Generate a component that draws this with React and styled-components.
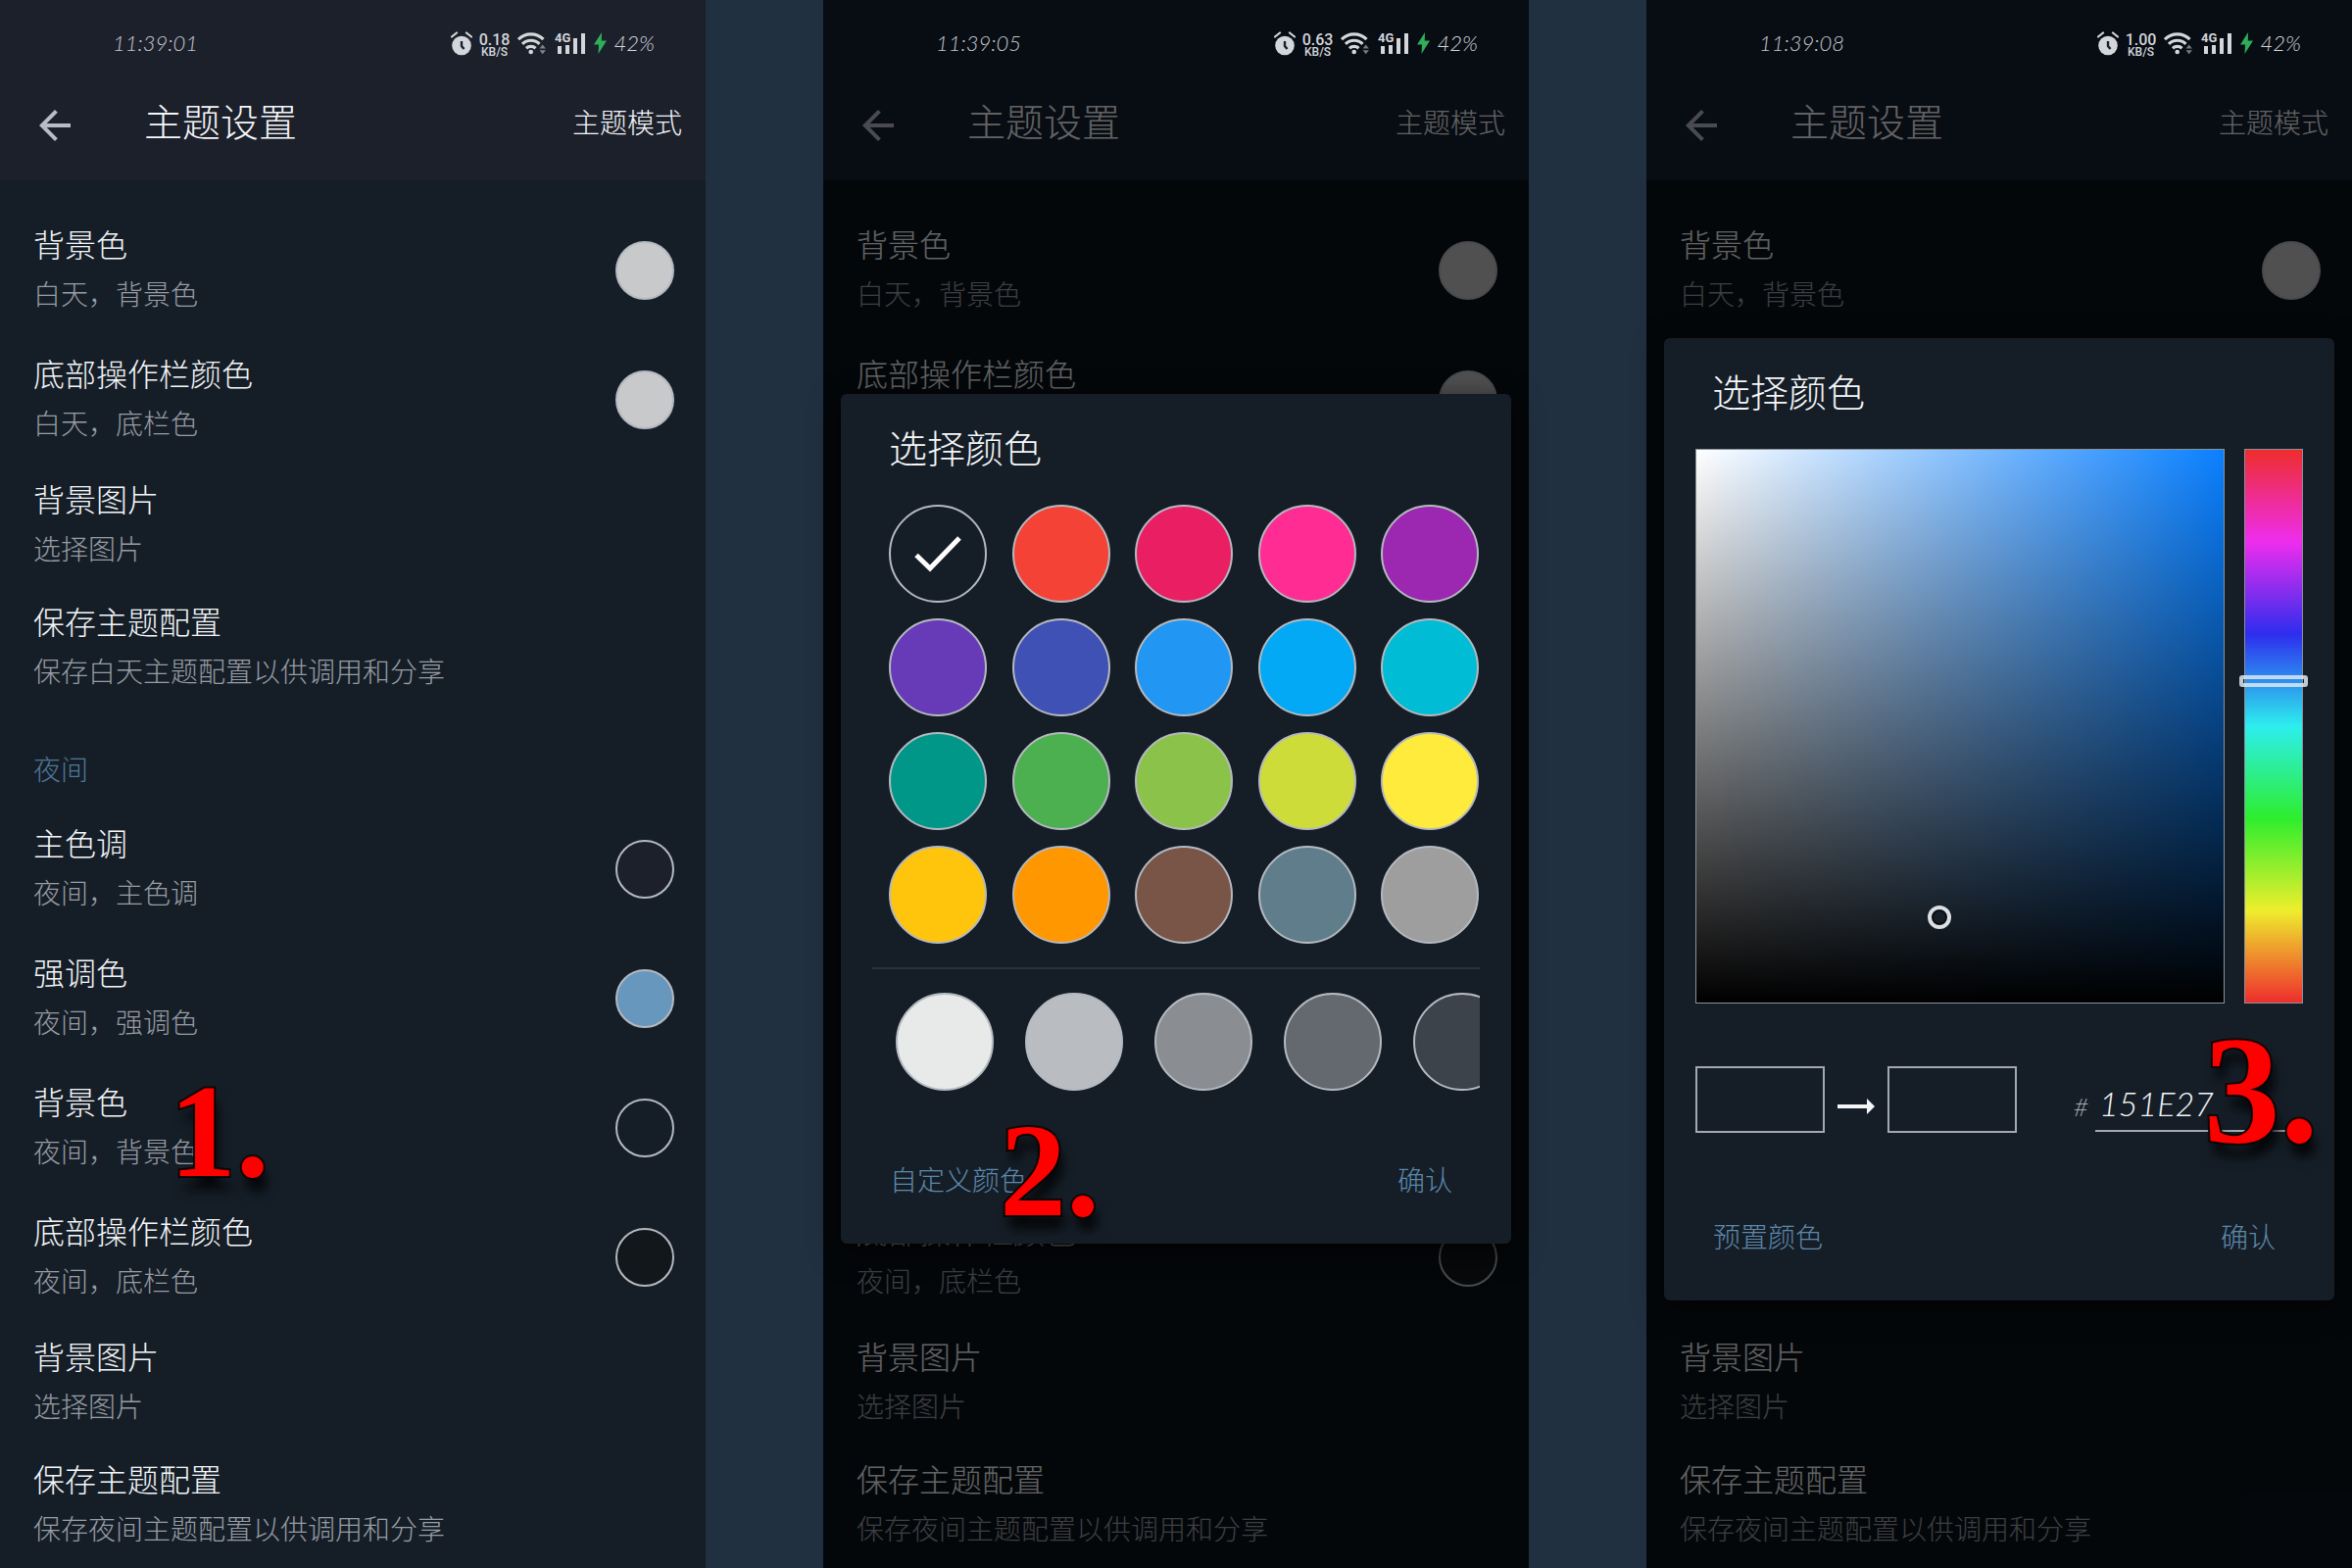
// Dependencies
import React, { useState } from 'react';
import styled, { createGlobalStyle } from 'styled-components';
import { MdArrowBack } from 'react-icons/md';

// Data
const daySettings = [
  { title: '背景色', summary: '白天，背景色', color: '#c8c9cb' },
  { title: '底部操作栏颜色', summary: '白天，底栏色', color: '#c8c9cb' },
  { title: '背景图片', summary: '选择图片' },
  { title: '保存主题配置', summary: '保存白天主题配置以供调用和分享' },
];

const nightSettings = [
  { title: '主色调', summary: '夜间，主色调', color: '#1c202b' },
  { title: '强调色', summary: '夜间，强调色', color: '#6797bd' },
  { title: '背景色', summary: '夜间，背景色', color: '#151e27' },
  { title: '底部操作栏颜色', summary: '夜间，底栏色', color: '#12171b' },
  { title: '背景图片', summary: '选择图片' },
  { title: '保存主题配置', summary: '保存夜间主题配置以供调用和分享' },
];

const presets = [
  '#151e27', '#f44336', '#e91e63', '#ff2c93', '#9c27b0',
  '#673ab7', '#3f51b5', '#2196f3', '#03a9f4', '#00bcd4',
  '#009688', '#4caf50', '#8bc34a', '#cddc39', '#ffeb3b',
  '#ffc40c', '#ff9800', '#795548', '#607d8b', '#9e9e9e',
];

const shades = ['#e8eaea', '#b9bdc1', '#8a8e92', '#646970', '#3d434b'];

// Styles
const GlobalStyle = createGlobalStyle`
  * {
    box-sizing: border-box;
  }
  body {
    margin: 0;
    background: #213040;
    font-family: 'Noto Sans CJK SC', sans-serif;
    font-weight: 300;
  }
  button {
    padding: 0;
    border: 0;
    background: none;
    font: inherit;
    color: inherit;
    cursor: pointer;
  }
`;

const Page = styled.main`
  display: grid;
  grid-template-columns: repeat(3, minmax(0, 1fr));
  column-gap: 5%;
  min-height: 100vh;
`;

const Phone = styled.section`
  position: relative;
  background: ${(props) => (props.$dimmed ? '#0b121b' : '#151e27')};
  color: #f4f6f8;
`;

const Header = styled.header`
  background: ${(props) => (props.$dimmed ? '#161e30' : '#1c202b')};
`;

const StatusBar = styled.div`
  position: relative;
  z-index: 2;
  display: flex;
  align-items: center;
  justify-content: space-between;
  height: 64px;
  padding: 24px 52px 0 115px;
  font-family: Lato, sans-serif;
  font-size: 22px;
  font-style: italic;
  line-height: 40px;
  color: #c3c6cc;
`;

const StatusIcons = styled.div`
  display: flex;
  align-items: center;
  gap: 8px;
  color: #d3d6db;

  svg {
    display: block;
  }
`;

const NetSpeed = styled.span`
  display: flex;
  flex-direction: column;
  align-items: center;
  width: 30px;
  padding-top: 6px;
  font-family: Roboto, sans-serif;
  font-size: 16px;
  font-style: normal;
  font-weight: 500;
  line-height: 13px;

  small {
    font-size: 12px;
  }
`;

const AppBar = styled.div`
  display: flex;
  align-items: center;
  height: 120px;
  padding: 0 24px 0 32px;
`;

const BackButton = styled.button`
  display: flex;
  margin-top: 8px;
  font-size: 48px;
  color: #b9bcc8;
`;

const PageTitle = styled.h1`
  flex: 1;
  margin: 0 0 0 67px;
  padding-bottom: 4px;
  font-size: 39px;
  font-weight: 300;
`;

const ModeButton = styled.button`
  font-size: 28px;
`;

const Settings = styled.div`
  padding-top: 26px;
`;

const SectionTitle = styled.h2`
  margin: 0;
  padding: 39px 34px 16px;
  font-size: 28px;
  font-weight: 300;
  line-height: 42px;
  color: #4f7899;
`;

const Row = styled.div`
  display: flex;
  align-items: center;
  justify-content: space-between;
  height: ${(props) => (props.$tall ? '132px' : '125px')};
  padding: 0 32px 0 34px;
`;

const RowText = styled.div`
  display: flex;
  flex-direction: column;
  gap: 9px;
  padding-bottom: 6px;
  line-height: 42px;
`;

const RowTitle = styled.span`
  font-size: 32px;
`;

const RowSummary = styled.span`
  font-size: 28px;
  color: #989ca4;
`;

const Swatch = styled.button`
  display: flex;
  flex: none;
  align-items: center;
  justify-content: center;
  width: ${(props) => props.$size}px;
  height: ${(props) => props.$size}px;
  border: 2px solid #b5b9c0;
  border-radius: 50%;
  background: ${(props) => props.$color};
`;

const Scrim = styled.div`
  position: absolute;
  inset: 0;
  z-index: 1;
  display: flex;
  flex-direction: column;
  justify-content: center;
  padding: 71px 18px 0;
  background: rgba(0, 0, 0, 0.6);
`;

const Dialog = styled.div`
  border-radius: 6px;
  background: #151e27;
  box-shadow: 0 8px 30px rgba(0, 0, 0, 0.7);
`;

const DialogTitle = styled.h2`
  margin: 0;
  padding: 29px 49px 36px;
  font-size: 39px;
  font-weight: 300;
  line-height: 48px;
`;

const PresetGrid = styled.div`
  display: grid;
  grid-template-columns: repeat(5, 100px);
  justify-content: space-between;
  row-gap: 16px;
  padding: 0 33px 0 49px;
`;

const Divider = styled.hr`
  height: 2px;
  margin: 24px 32px;
  border: 0;
  background: #2a333b;
`;

const ShadeStrip = styled.div`
  display: flex;
  gap: 32px;
  margin: 0 32px 28px;
  padding-left: 24px;
  overflow: hidden;
`;

const DialogActions = styled.div`
  display: flex;
  align-items: center;
  justify-content: space-between;
  height: 128px;
  padding: 0 60px 4px 50px;
  font-size: 28px;
  color: #5d88ab;
`;

const PickerArea = styled.div`
  display: flex;
  gap: 20px;
  height: 566px;
  margin: 0 32px 64px;
`;

const Saturation = styled.div`
  position: relative;
  flex: 1;
  border: 1px solid #8b9198;
  background: linear-gradient(to top, #000, transparent),
    linear-gradient(to right, #fff, #0a80ff);
`;

const Cursor = styled.span`
  position: absolute;
  width: 24px;
  height: 24px;
  margin: -12px 0 0 -12px;
  border: 4px solid #dcdfe3;
  border-radius: 50%;
  box-shadow: inset 0 0 0 2px #0b0e11;
`;

const HueSlider = styled.input`
  appearance: none;
  writing-mode: vertical-lr;
  direction: rtl;
  width: 60px;
  height: 100%;
  margin: 0;
  border: 1px solid #8b9198;
  background: linear-gradient(
    #ee2d2d,
    #ee2dee,
    #2d2dee,
    #2deeee,
    #2dee2d,
    #eeee2d,
    #ee2d2d
  );

  &::-webkit-slider-thumb {
    appearance: none;
    width: 70px;
    height: 12px;
    border: 4px solid rgba(220, 232, 240, 0.85);
    border-radius: 3px;
  }
`;

const CompareRow = styled.div`
  display: flex;
  justify-content: space-between;
  margin: 0 40px 43px 32px;
`;

const Compare = styled.div`
  display: flex;
  gap: 13px;
`;

const ColorBox = styled.span`
  width: 132px;
  height: 68px;
  border: 2px solid #a3a8b0;
  background: #151e27;
`;

const HexField = styled.label`
  display: flex;
  gap: 7px;
  padding-top: 15px;
  font-family: Lato, sans-serif;
  font-size: 26px;
  font-style: italic;
  line-height: 52px;
  color: #a3a8b0;
`;

const HexInput = styled.input`
  width: 204px;
  height: 52px;
  padding: 0 0 4px 4px;
  border: 0;
  border-bottom: 2px solid #a3a8b0;
  background: none;
  font: inherit;
  font-size: 34px;
  color: #f4f6f8;
`;

// Step numbers pinned over the phones
const Step = styled.strong`
  position: absolute;
  z-index: 3;
  left: ${(props) => props.$left};
  top: ${(props) => props.$top};
  font-family: 'Liberation Serif', serif;
  font-size: ${(props) => props.$size}px;
  font-weight: 700;
  line-height: 1;
  color: #f00;
  -webkit-text-stroke: 4px #140404;
  paint-order: stroke fill;
  text-shadow: 4px 14px 12px rgba(0, 0, 0, 0.8);
`;

const AlarmIcon = () => (
  <svg width='22' height='25' viewBox='0 0 22 25'>
    <circle cx='11' cy='14.5' r='9.8' fill='currentColor' />
    <path
      d='M1 5.500 6 1.500M21 5.500 16 1.500'
      stroke='currentColor'
      strokeWidth='2.2'
      strokeLinecap='round'
    />
    <path d='M11 10v5l2.500 3' fill='none' stroke='#1c202b' strokeWidth='2.4' />
  </svg>
);

const WifiIcon = () => (
  <svg width='30' height='24' viewBox='0 0 30 24'>
    <g fill='none' stroke='currentColor' strokeWidth='3.2'>
      <path d='M1 8.200a18 18 0 0 1 25.500 0' />
      <path d='M5 12.800a12.500 12.500 0 0 1 17.500 0' />
      <path d='M9 17.200a7 7 0 0 1 9.500 0' />
    </g>
    <circle cx='13.7' cy='21' r='2.3' fill='currentColor' />
    <path
      d='m22.500 17.500 3.200-4 3.200 4zM22.500 19.200h6.400l-3.200 4z'
      fill='currentColor'
      opacity='.55'
    />
  </svg>
);

const SignalIcon = () => (
  <svg width='32' height='24' viewBox='0 0 32 24'>
    <g fill='currentColor'>
      <rect x='3' y='15' width='4' height='8' />
      <rect x='11' y='14' width='4' height='9' />
      <rect x='19' y='7' width='4' height='16' />
      <rect x='27' y='2' width='4' height='21' />
    </g>
    <text
      x='0'
      y='11'
      fill='currentColor'
      fontFamily='Roboto, sans-serif'
      fontSize='13'
      fontStyle='normal'
      fontWeight='700'
    >
      4G
    </text>
  </svg>
);

const BoltIcon = () => (
  <svg width='13' height='22' viewBox='0 0 13 22'>
    <path d='M8 0 0 12.500h5L4.500 22 13 8.500H7.800z' fill='#2fae5a' />
  </svg>
);

const CheckIcon = () => (
  <svg width='48' height='40' viewBox='0 0 48 40'>
    <path d='M2 21.500 16 35 46 4' fill='none' stroke='#fff' strokeWidth='5' />
  </svg>
);

const RightArrow = () => (
  <svg width='38' height='68' viewBox='0 0 38 68'>
    <path d='M0 39h30v-6l8 8-8 8v-6H0z' fill='#f4f6f8' />
  </svg>
);

const SettingRow = ({ title, summary, color }) => (
  <Row $tall={!!color}>
    <RowText>
      <RowTitle>{title}</RowTitle>
      <RowSummary>{summary}</RowSummary>
    </RowText>
    {color && <Swatch $size={60} $color={color} aria-label={title} />}
  </Row>
);

const ThemePhone = ({ time, speed, dimmed, children }) => {
  return (
    <Phone $dimmed={dimmed}>
      <Header $dimmed={dimmed}>
        <StatusBar>
          <span>{time}</span>
          <StatusIcons>
            <AlarmIcon />
            <NetSpeed>
              {speed}
              <small>KB/S</small>
            </NetSpeed>
            <WifiIcon />
            <SignalIcon />
            <BoltIcon />
            <span>42%</span>
          </StatusIcons>
        </StatusBar>
        <AppBar>
          <BackButton aria-label='返回'>
            <MdArrowBack />
          </BackButton>
          <PageTitle>主题设置</PageTitle>
          <ModeButton>主题模式</ModeButton>
        </AppBar>
      </Header>
      <Settings>
        {daySettings.map((item) => (
          <SettingRow key={item.title} {...item} />
        ))}
        <SectionTitle>夜间</SectionTitle>
        {nightSettings.map((item) => (
          <SettingRow key={item.title} {...item} />
        ))}
      </Settings>
      {children}
    </Phone>
  );
};

const PresetDialog = () => {
  const [selected, setSelected] = useState(presets[0]);

  return (
    <Scrim>
      <Dialog role='dialog' aria-label='选择颜色'>
        <DialogTitle>选择颜色</DialogTitle>
        <PresetGrid>
          {presets.map((color) => (
            <Swatch
              key={color}
              $size={100}
              $color={color}
              aria-label={color}
              onClick={() => setSelected(color)}
            >
              {selected === color && <CheckIcon />}
            </Swatch>
          ))}
        </PresetGrid>
        <Divider />
        <ShadeStrip>
          {shades.map((color) => (
            <Swatch key={color} $size={100} $color={color} aria-label={color} />
          ))}
        </ShadeStrip>
        <DialogActions>
          <button>自定义颜色</button>
          <button>确认</button>
        </DialogActions>
      </Dialog>
    </Scrim>
  );
};

const CustomDialog = () => {
  const [hue, setHue] = useState(210);
  const [hex, setHex] = useState('151E27');
  const saturation = 18 / 39;
  const brightness = 39 / 255;

  return (
    <Scrim>
      <Dialog role='dialog' aria-label='选择颜色'>
        <DialogTitle>选择颜色</DialogTitle>
        <PickerArea>
          <Saturation>
            <Cursor
              style={{
                left: `${saturation * 100}%`,
                top: `${(1 - brightness) * 100}%`,
              }}
            />
          </Saturation>
          <HueSlider
            type='range'
            min='0'
            max='360'
            value={hue}
            aria-label='色相'
            onChange={(e) => setHue(e.target.value)}
          />
        </PickerArea>
        <CompareRow>
          <Compare>
            <ColorBox />
            <RightArrow />
            <ColorBox />
          </Compare>
          <HexField>
            #
            <HexInput value={hex} onChange={(e) => setHex(e.target.value)} />
          </HexField>
        </CompareRow>
        <DialogActions>
          <button>预置颜色</button>
          <button>确认</button>
        </DialogActions>
      </Dialog>
    </Scrim>
  );
};

const App = () => {
  return (
    <>
      <GlobalStyle />
      <Page>
        <ThemePhone time='11:39:01' speed='0.18'>
          <Step $left='24%' $top='1086px' $size={136}>1.</Step>
        </ThemePhone>
        <ThemePhone time='11:39:05' speed='0.63' dimmed>
          <PresetDialog />
          <Step $left='25%' $top='1126px' $size={136}>2.</Step>
        </ThemePhone>
        <ThemePhone time='11:39:08' speed='1.00' dimmed>
          <CustomDialog />
          <Step $left='79%' $top='1035px' $size={156}>3.</Step>
        </ThemePhone>
      </Page>
    </>
  );
};

export default App;
